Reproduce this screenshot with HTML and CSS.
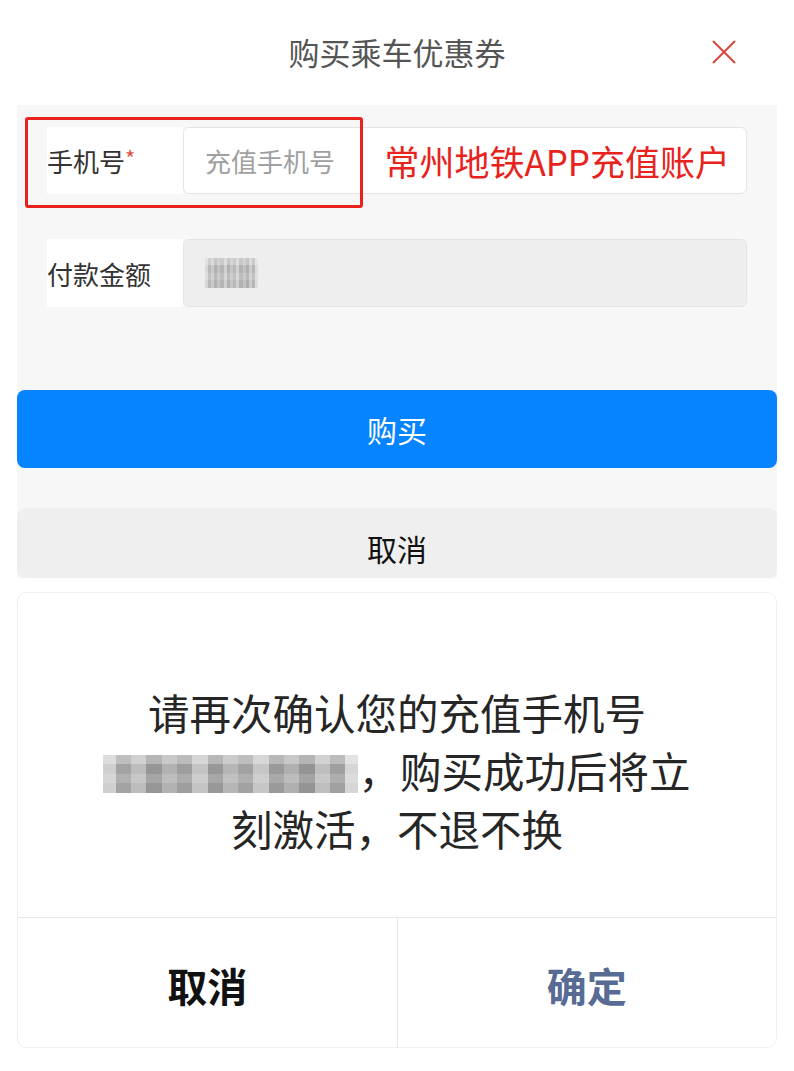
FILE: index.html
```html
<!DOCTYPE html>
<html lang="zh-CN">
<head>
    <meta charset="UTF-8">
    <meta name="viewport" content="width=device-width, initial-scale=1.0">
    <title>购买乘车优惠券</title>
    <link rel="stylesheet" href="styles.css">
</head>
<body>
    <div class="header">
        <span></span>
        <h1 class="title">购买乘车优惠券</h1>
        <button class="close" aria-label="关闭">
            <svg width="26" height="26" viewBox="0 0 26 26">
                <path d="M2 2 L24 24 M24 2 L2 24" stroke="#d8453c" stroke-width="2" fill="none"/>
            </svg>
        </button>
    </div>

    <div class="panel">
        <div class="form-row">
            <div class="mark"></div>
            <label class="label">手机号<span class="req">*</span></label>
            <div class="field">
                <span class="placeholder">充值手机号</span>
                <span class="note">常州地铁APP充值账户</span>
            </div>
        </div>
        <div class="form-row">
            <label class="label">付款金额</label>
            <div class="field disabled">
                <span class="mosaic small"></span>
            </div>
        </div>

        <button class="btn-buy">购买</button>
        <button class="btn-cancel">取消</button>
    </div>

    <div class="dialog">
        <div class="message">
            请再次确认您的充值手机号<br>
            <span class="mosaic phone"></span>，购买成功后将立<br>
            刻激活，不退不换
        </div>
        <div class="actions">
            <button class="act cancel">取消</button>
            <button class="act ok">确定</button>
        </div>
    </div>
</body>
</html>
```

FILE: styles.css
```css
:root {
    --panel-bg: #f7f7f7;
    --text-main: #333333;
    --text-muted: #a0a0a0;
    --accent: #0683fe;
    --alert: #e8231e;
    --link: #576b95;
}

* {
    margin: 0;
    padding: 0;
    box-sizing: border-box;
    font-family: "Noto Sans CJK SC", "Noto Sans", sans-serif;
}

body {
    background: #ffffff;
    color: var(--text-main);
    width: 794px;
}

button {
    border: none;
    background: none;
    cursor: pointer;
}

.header {
    height: 105px;
    display: grid;
    grid-template-columns: 1fr auto 1fr;
    align-items: center;
    padding-bottom: 2px;
}

.title {
    font-size: 31px;
    font-weight: 400;
    color: #555555;
}

.close {
    justify-self: end;
    margin-right: 57px;
    display: flex;
}

.panel {
    margin: 0 17px;
    background: var(--panel-bg);
    padding-top: 22px;
    display: flex;
    flex-direction: column;
}

.form-row {
    position: relative;
    display: flex;
    height: 67px;
    margin: 0 30px 45px;
}

.form-row + .form-row {
    height: 68px;
    margin-bottom: 0;
}

.mark {
    position: absolute;
    left: -22px;
    top: -10px;
    width: 338px;
    height: 91px;
    border: 3px solid var(--alert);
    border-radius: 3px;
    z-index: 2;
}

.label {
    width: 136px;
    background: #ffffff;
    display: flex;
    align-items: center;
    font-size: 26px;
    color: var(--text-main);
}

.req {
    color: #d9534f;
    font-size: 22px;
    margin-top: -8px;
}

.field {
    flex: 1;
    background: #ffffff;
    border: 1px solid #e4e4e4;
    border-radius: 6px;
    display: flex;
    align-items: center;
    padding: 0 16px 0 21px;
}

.field.disabled {
    background: #eeeeee;
}

.placeholder {
    font-size: 26px;
    color: var(--text-muted);
}

.note {
    margin-left: auto;
    font-size: 35px;
    color: var(--alert);
}

.mosaic {
    display: inline-block;
    vertical-align: middle;
    background:
        linear-gradient(180deg, rgba(255,255,255,.3) 0 25%, transparent 25% 50%, rgba(255,255,255,.15) 50% 75%, transparent 75%),
        linear-gradient(90deg, #cfcfcf 0 5%, #a3a3a3 5% 11%, #bdbdbd 11% 17%, #969696 17% 23%, #b2b2b2 23% 29%, #9e9e9e 29% 35%, #c4c4c4 35% 41%, #989898 41% 47%, #b6b6b6 47% 53%, #a2a2a2 53% 59%, #c6c6c6 59% 65%, #9a9a9a 65% 71%, #b0b0b0 71% 77%, #949494 77% 83%, #bebebe 83% 89%, #a0a0a0 89% 95%, #d6d6d6 95%);
    filter: blur(0.5px);
}

.mosaic.small {
    width: 53px;
    height: 30px;
    opacity: 0.7;
}

.mosaic.phone {
    width: 255px;
    height: 38px;
    margin-top: -6px;
}

.btn-buy {
    display: block;
    width: 100%;
    height: 78px;
    margin-top: 83px;
    background: var(--accent);
    color: #ffffff;
    font-size: 30px;
    border-radius: 8px;
}

.btn-cancel {
    display: block;
    width: 100%;
    height: 70px;
    margin-top: 40px;
    background: #efefef;
    color: #111111;
    font-size: 30px;
    border-radius: 8px;
    padding-top: 10px;
}

.dialog {
    margin: 14px 17px 0;
    height: 456px;
    border: 1px solid #efefef;
    border-radius: 10px;
    display: flex;
    flex-direction: column;
}

.message {
    height: 324px;
    padding-top: 90px;
    text-align: center;
    font-size: 41.5px;
    line-height: 58px;
    color: #262626;
}

.actions {
    flex: 1;
    display: flex;
    border-top: 1px solid #e8e8e8;
}

.act {
    flex: 1;
    font-size: 40px;
    padding-top: 4px;
}

.act.cancel {
    color: #111111;
    font-weight: 700;
    border-right: 1px solid #e8e8e8;
}

.act.ok {
    color: var(--link);
    font-weight: 700;
}
```
